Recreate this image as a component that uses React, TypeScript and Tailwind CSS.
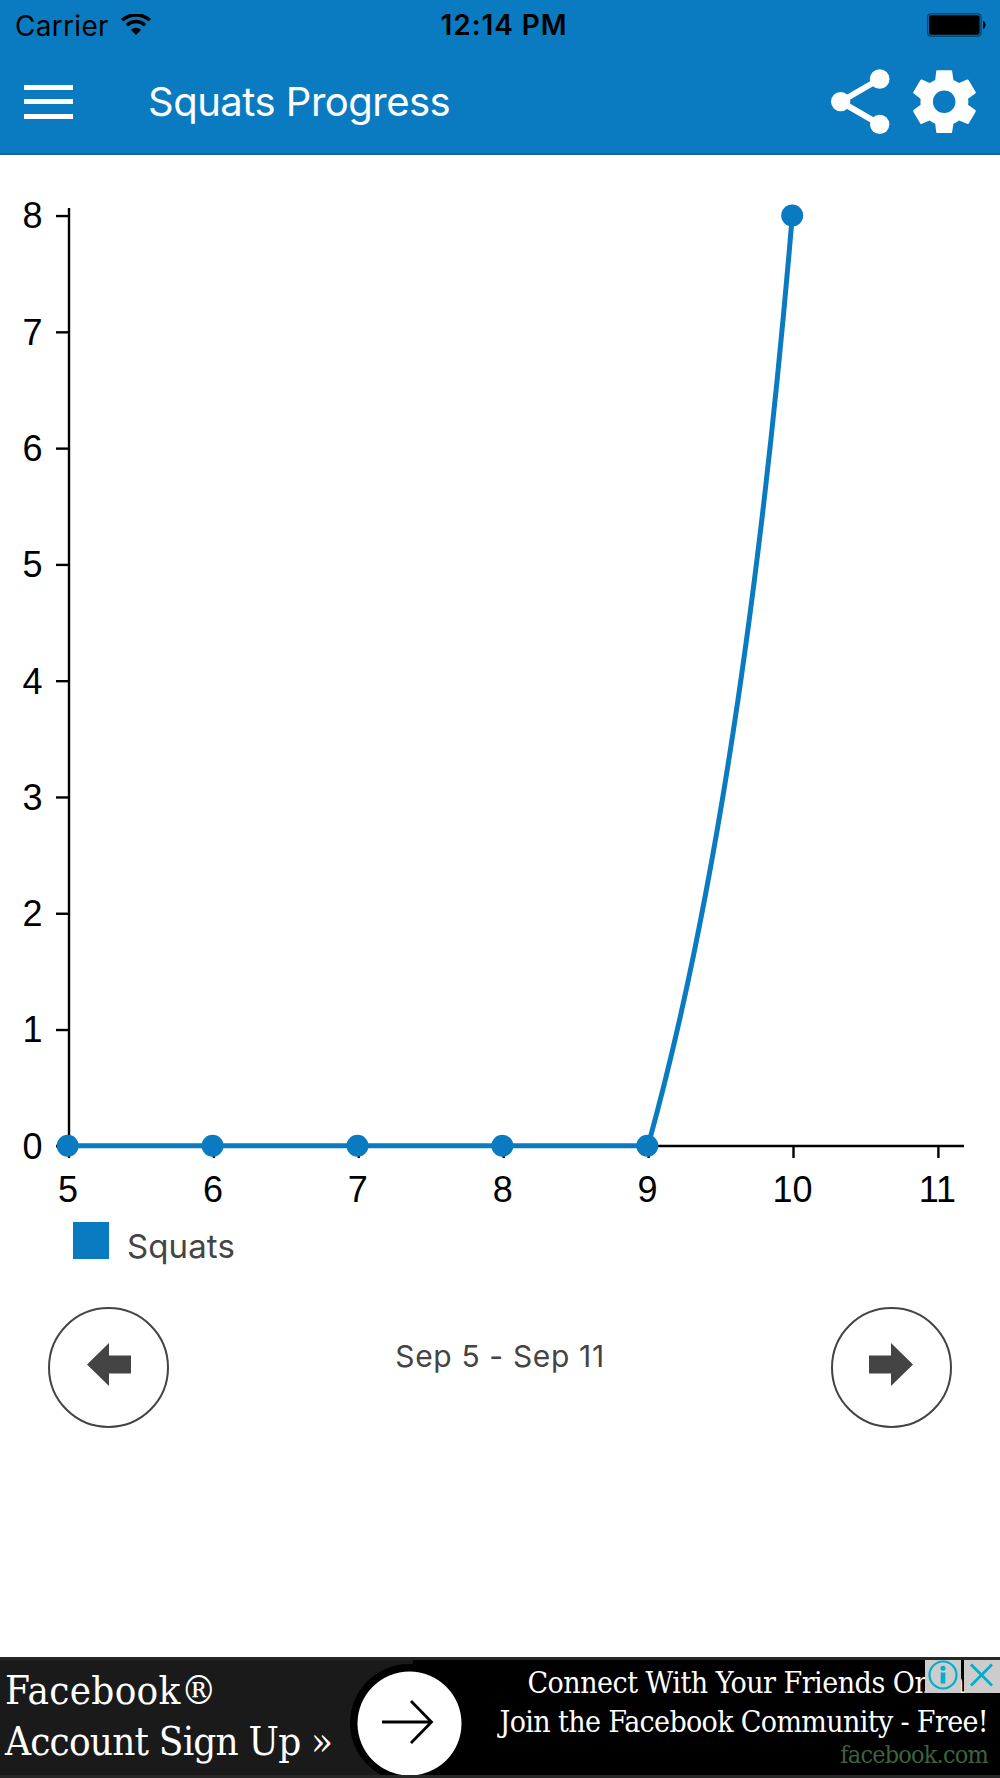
import { ReactNode } from 'react';

type Point = {
  day: number;
  count: number;
};

const points: Point[] = [
  { day: 5, count: 0 },
  { day: 6, count: 0 },
  { day: 7, count: 0 },
  { day: 8, count: 0 },
  { day: 9, count: 0 },
  { day: 10, count: 8 },
];

const days = [5, 6, 7, 8, 9, 10, 11];
const counts = [0, 1, 2, 3, 4, 5, 6, 7, 8];

const toX = (day: number) => 69 + (day - 5) * 144.9;
const toY = (count: number) => 1146.3 - count * 116.28;

const StatusBar = () => (
  <div className="flex h-[50px] items-center px-[14px] pt-[1px] text-[28px] leading-none text-black">
    <div className="flex flex-1 items-center gap-[12px] pl-[1px]">
      <span className="tracking-[0.3px]">Carrier</span>
      <svg className="h-[21px] w-[30px] -mt-[3px]" viewBox="0 0 30 21" fill="none" stroke="#000">
        <path d="M1.2 6.2C9-.9 21-.9 28.8 6.2" strokeWidth="3.6" />
        <path d="M5.9 11.2C11.2 6.3 18.8 6.3 24.1 11.2" strokeWidth="3.6" />
        <path d="M15 21L9.8 15.8C12.8 13.1 17.2 13.1 20.2 15.8Z" fill="#000" stroke="none" />
      </svg>
    </div>
    <span className="ml-[7px] -mt-[1px] font-semibold tracking-[0.9px]">12:14 PM</span>
    <div className="flex flex-1 items-center justify-end">
      <svg className="-mt-[1px] h-[24px] w-[59px]" viewBox="0 0 59 24">
        <rect x="0.6" y="0.8" width="53.4" height="22.4" rx="3.5" fill="none" stroke="#063f63" strokeWidth="1.2" />
        <rect x="2" y="2.2" width="50.6" height="19.6" rx="2" />
        <path d="M56 8C59.4 9 59.4 15 56 16Z" />
      </svg>
    </div>
  </div>
);

const ShareIcon = () => (
  <svg className="h-[65px] w-[58.7px]" viewBox="0 0 176 195" fill="#fff">
    <path d="M146 30L29 98L146 166" fill="none" stroke="#fff" strokeWidth="18" />
    <circle cx="146" cy="30" r="29.5" />
    <circle cx="29" cy="98" r="29" />
    <circle cx="146" cy="166" r="29" />
  </svg>
);

const GearIcon = () => (
  <svg className="h-[63px] w-[63px]" viewBox="0 0 190 190" fill="#fff" fillRule="evenodd">
    <path d="M73 1H115Q118 1 118 4L122 30Q131 34 139 39L163 29Q166 28 168 31L189 66Q190 69 188 71L166 87Q168 96 166 105L188 121Q190 123 189 126L168 161Q166 164 163 162L139 152Q131 158 122 162L118 187Q118 190 115 190H73Q70 190 70 187L67 162Q58 158 50 152L27 162Q24 164 22 161L1 126Q0 123 2 121L23 105Q22 96 23 87L2 71Q0 69 1 66L22 31Q24 28 27 29L50 39Q58 34 67 30L70 4Q70 1 73 1ZM94 61.5A34 34 0 1 0 94 129.5A34 34 0 1 0 94 61.5Z" />
  </svg>
);

const Header = () => (
  <header className="h-[155px] border-b-2 border-[#1d6595] bg-[#0b7bc1]">
    <StatusBar />
    <div className="flex h-[103px] items-center pr-[24px] pl-[24px]">
      <button aria-label="Menu" className="flex w-[49px] flex-col gap-[9.5px]">
        <span className="h-[5px] bg-white" />
        <span className="h-[5px] bg-white" />
        <span className="h-[5px] bg-white" />
      </button>
      <h1 className="ml-[75px] flex-1 text-[40px] leading-none tracking-[-0.5px] text-white">Squats Progress</h1>
      <div className="flex items-center gap-[23px]">
        <ShareIcon />
        <GearIcon />
      </div>
    </div>
  </header>
);

const Chart = () => (
  <svg className="block h-[1065px] w-full" viewBox="0 155 1000 1065">
    <g stroke="#000" strokeWidth="2.4">
      <path d="M69 208V1146M56 1146H964" />
      {counts.map((count) => (
        <path key={count} d={`M56 ${toY(count)}H69`} />
      ))}
      {days.map((day) => (
        <path key={day} d={`M${toX(day)} 1146V1158`} />
      ))}
    </g>
    <g fontFamily="'Liberation Sans', Arial, sans-serif" fontSize="36">
      {counts.map((count) => (
        <text key={count} x="42.5" y={toY(count) + 12.4} textAnchor="end">{count}</text>
      ))}
      {days.map((day) => (
        <text key={day} x={toX(day) - 1} y="1202.4" textAnchor="middle">{day}</text>
      ))}
    </g>
    <path d="M68 1145.8H648Q743 804 792.3 215.5" fill="none" stroke="#0b7bc1" strokeWidth="5" />
    {points.map(({ day, count }) => (
      <circle key={day} cx={toX(day) - 1.3} cy={toY(count) - 0.6} r="11" fill="#0b7bc1" />
    ))}
  </svg>
);

const RoundButton = ({ label, children }: { label: string; children: ReactNode }) => (
  <button aria-label={label} className="flex h-[121px] w-[121px] items-center justify-center rounded-full border-2 border-[#444] pb-[6px]">
    {children}
  </button>
);

const WeekPicker = () => (
  <div className="mt-[48px] flex justify-between px-[48px] text-[#444]">
    <RoundButton label="Previous week">
      <svg className="h-[43px] w-[44px]" viewBox="0 0 44 43" fill="#444">
        <path d="M0 21.5L22 0V12.5H44V30.5H22V43Z" />
      </svg>
    </RoundButton>
    <p className="mt-[34px] text-[30px] leading-none tracking-[0.65px]">Sep 5 - Sep 11</p>
    <RoundButton label="Next week">
      <svg className="h-[43px] w-[44px]" viewBox="0 0 44 43" fill="#444">
        <path d="M44 21.5L22 0V12.5H0V30.5H22V43Z" />
      </svg>
    </RoundButton>
  </div>
);

const AdBanner = () => (
  <div className="relative mt-auto flex h-[121px] overflow-hidden border-t-[3px] border-b-[3px] border-[#272727] bg-black font-['DejaVu_Serif_Condensed','DejaVu_Serif',serif] text-white [font-stretch:condensed]">
    <div className="w-[413px] bg-[#1a1a1a] pt-[5px] pl-[5px] text-[40px] leading-[51px] whitespace-nowrap">
      <p className="tracking-[0.3px]">Facebook®</p>
      <p className="tracking-[-0.8px]">Account Sign Up »</p>
    </div>
    <div className="flex-1 pt-[3px] pr-[12px] text-right text-[30px] leading-[39px] whitespace-nowrap">
      <p className="tracking-[-0.5px]">Connect With Your Friends Online.</p>
      <p className="tracking-[-0.65px]">Join the Facebook Community - Free!</p>
      <p className="text-[25px] leading-[27px] tracking-[-0.8px] text-[#3b633f]">facebook.com</p>
    </div>
    <svg className="absolute top-[4px] left-[350px] h-[118px] w-[118px]" viewBox="0 0 118 118">
      <circle cx="59" cy="59" r="59" />
      <circle cx="59.5" cy="59.5" r="52" fill="#fff" />
      <path d="M32 58H81M61 37L81.5 58L61 79" fill="none" stroke="#000" strokeWidth="2.8" />
    </svg>
    <div className="absolute -top-[3px] right-0 flex gap-[3px]">
      <svg className="h-[36px] w-[36px] bg-[#ccc]" viewBox="0 0 36 36" fill="none" stroke="#00aecd">
        <circle cx="18" cy="18" r="13.5" strokeWidth="2.2" />
        <circle cx="18" cy="11.3" r="2.5" fill="#00aecd" stroke="none" />
        <path d="M18 15.5V26.5" strokeWidth="4.6" />
      </svg>
      <svg className="h-[36px] w-[36px] bg-[#ccc]" viewBox="0 0 36 36" fill="none" stroke="#00aecd" strokeWidth="2.8">
        <path d="M7 7.5L28 28.5M28 7.5L7 28.5" />
      </svg>
    </div>
  </div>
);

const App = () => {
  return (
    <div className="flex h-[1778px] w-[1000px] flex-col bg-white font-[Inter,sans-serif]">
      <Header />
      <main>
        <Chart />
        <div className="mt-[2px] flex pl-[73px]">
          <span className="h-[37px] w-[36px] bg-[#0b7bc1]" />
          <span className="mt-[8px] ml-[18px] h-[29px] text-[33px] leading-[33px] tracking-[0.1px] text-[#444]">Squats</span>
        </div>
        <WeekPicker />
      </main>
      <AdBanner />
    </div>
  );
};

export default App;
